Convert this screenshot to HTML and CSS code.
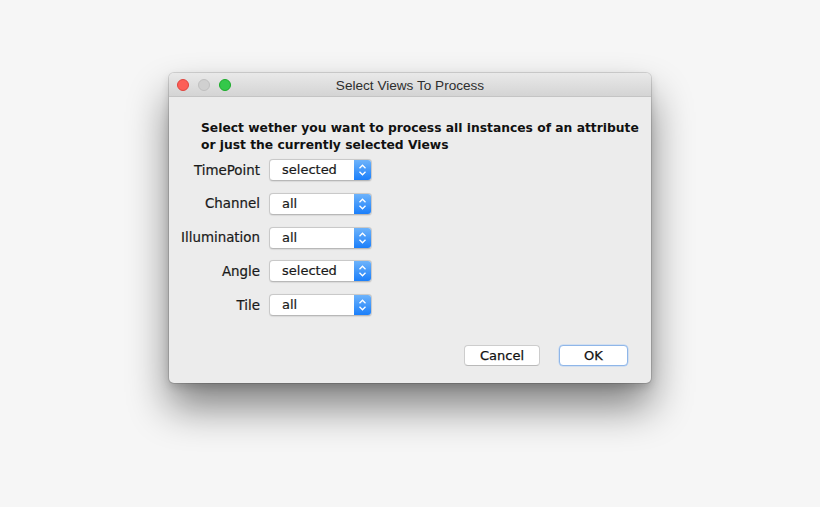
FILE: index.html
```html
<!DOCTYPE html>
<html>
<head>
<meta charset="utf-8">
<link rel="stylesheet" href="styles.css">
</head>
<body>
<div class="window">
  <div class="titlebar">
    <div class="lights">
      <span class="light red"></span>
      <span class="light gray"></span>
      <span class="light green"></span>
    </div>
    <div class="title">Select Views To Process</div>
    <div></div>
  </div>
  <div class="content">
    <p class="heading">Select wether you want to process all instances of an attribute<br>or just the currently selected Views</p>
    <div class="form">
      <label class="lbl">TimePoint</label>
      <div class="popup"><span class="val">selected</span><span class="step"><svg width="17" height="20" viewBox="0 0 17 20"><path d="M5.5 8.2 L8.5 5.2 L11.5 8.2 M5.5 11.8 L8.5 14.8 L11.5 11.8" fill="none" stroke="#fff" stroke-width="1.3"/></svg></span></div>
      <label class="lbl">Channel</label>
      <div class="popup"><span class="val">all</span><span class="step"><svg width="17" height="20" viewBox="0 0 17 20"><path d="M5.5 8.2 L8.5 5.2 L11.5 8.2 M5.5 11.8 L8.5 14.8 L11.5 11.8" fill="none" stroke="#fff" stroke-width="1.3"/></svg></span></div>
      <label class="lbl">Illumination</label>
      <div class="popup"><span class="val">all</span><span class="step"><svg width="17" height="20" viewBox="0 0 17 20"><path d="M5.5 8.2 L8.5 5.2 L11.5 8.2 M5.5 11.8 L8.5 14.8 L11.5 11.8" fill="none" stroke="#fff" stroke-width="1.3"/></svg></span></div>
      <label class="lbl">Angle</label>
      <div class="popup"><span class="val">selected</span><span class="step"><svg width="17" height="20" viewBox="0 0 17 20"><path d="M5.5 8.2 L8.5 5.2 L11.5 8.2 M5.5 11.8 L8.5 14.8 L11.5 11.8" fill="none" stroke="#fff" stroke-width="1.3"/></svg></span></div>
      <label class="lbl">Tile</label>
      <div class="popup"><span class="val">all</span><span class="step"><svg width="17" height="20" viewBox="0 0 17 20"><path d="M5.5 8.2 L8.5 5.2 L11.5 8.2 M5.5 11.8 L8.5 14.8 L11.5 11.8" fill="none" stroke="#fff" stroke-width="1.3"/></svg></span></div>
    </div>
    <div class="buttons">
      <button class="btn cancel">Cancel</button>
      <button class="btn ok">OK</button>
    </div>
  </div>
</div>
</body>
</html>
```

FILE: styles.css
```css
html, body {
  margin: 0;
  padding: 0;
}
body {
  width: 820px;
  height: 507px;
  background: #f6f6f6;
  font-family: "DejaVu Sans", "Liberation Sans", sans-serif;
  font-size: 13px;
  color: #1a1a1a;
  padding: 73px 0 0 169px;
  box-sizing: border-box;
  overflow: hidden;
}
.window {
  width: 482px;
  height: 310px;
  background: #ececec;
  border-radius: 5px;
  box-shadow: 0 0 0 1px rgba(0,0,0,0.12), 0 24px 40px rgba(0,0,0,0.48), 0 4px 10px rgba(0,0,0,0.15);
  display: flex;
  flex-direction: column;
  overflow: hidden;
}
.titlebar {
  height: 23px;
  background: linear-gradient(#e9e9e9, #d4d4d4);
  border-bottom: 1px solid #c4c4c4;
  display: grid;
  grid-template-columns: 1fr auto 1fr;
  align-items: center;
}
.lights {
  display: flex;
  gap: 9px;
  padding-left: 8px;
}
.light {
  width: 12px;
  height: 12px;
  border-radius: 50%;
  box-sizing: border-box;
}
.red { background: #fc5f57; border: 0.5px solid #e0443e; }
.gray { background: #d0d0d0; border: 0.5px solid #c0c0c0; }
.green { background: #34c84a; border: 0.5px solid #1aab29; }
.title {
  font-family: "Liberation Sans", Arial, sans-serif;
  font-size: 13.6px;
  color: #2e2e2e;
  padding-top: 2px;
}
.content {
  flex: 1;
  display: flex;
  flex-direction: column;
  padding: 23px 23px 17px 0;
}
.heading {
  margin: 0 0 5px 32px;
  font-weight: bold;
  font-size: 12.3px;
  line-height: 17px;
  color: #111;
  white-space: nowrap;
}
.form {
  display: grid;
  grid-template-columns: 91px 103px;
  column-gap: 9px;
  row-gap: 11.75px;
  align-items: center;
}
.lbl {
  text-align: right;
  font-size: 13.4px;
  color: #1a1a1a;
  -webkit-text-stroke: 0.2px #1a1a1a;
}
.popup {
  height: 22px;
  box-sizing: border-box;
  background: #fff;
  border: 1px solid #c9c9c9;
  border-bottom-color: #b8b8b8;
  border-radius: 4px;
  display: flex;
  align-items: stretch;
  overflow: hidden;
  box-shadow: 0 0.5px 1px rgba(0,0,0,0.08);
}
.val {
  flex: 1;
  padding-left: 12px;
  line-height: 20px;
  font-size: 13px;
  color: #1a1a1a;
  -webkit-text-stroke: 0.2px #1a1a1a;
}
.step {
  width: 17px;
  background: linear-gradient(#6db3fb, #1b7ffa);
  display: flex;
  align-items: center;
  justify-content: center;
}
.buttons {
  margin-top: auto;
  display: flex;
  justify-content: flex-end;
  gap: 19px;
}
.btn {
  height: 21px;
  box-sizing: border-box;
  background: #fff;
  border-radius: 4px;
  font-family: "DejaVu Sans", "Liberation Sans", sans-serif;
  font-size: 13px;
  color: #111;
  padding: 0;
  line-height: 19px;
  -webkit-text-stroke: 0.25px #111;
}
.cancel {
  width: 76px;
  border: 1px solid #cdcdcd;
  border-bottom-color: #b9b9b9;
}
.ok {
  width: 69px;
  border: 1px solid #8fb6e8;
  box-shadow: 0 0 0 0.5px #b8d2f3;
}
```
